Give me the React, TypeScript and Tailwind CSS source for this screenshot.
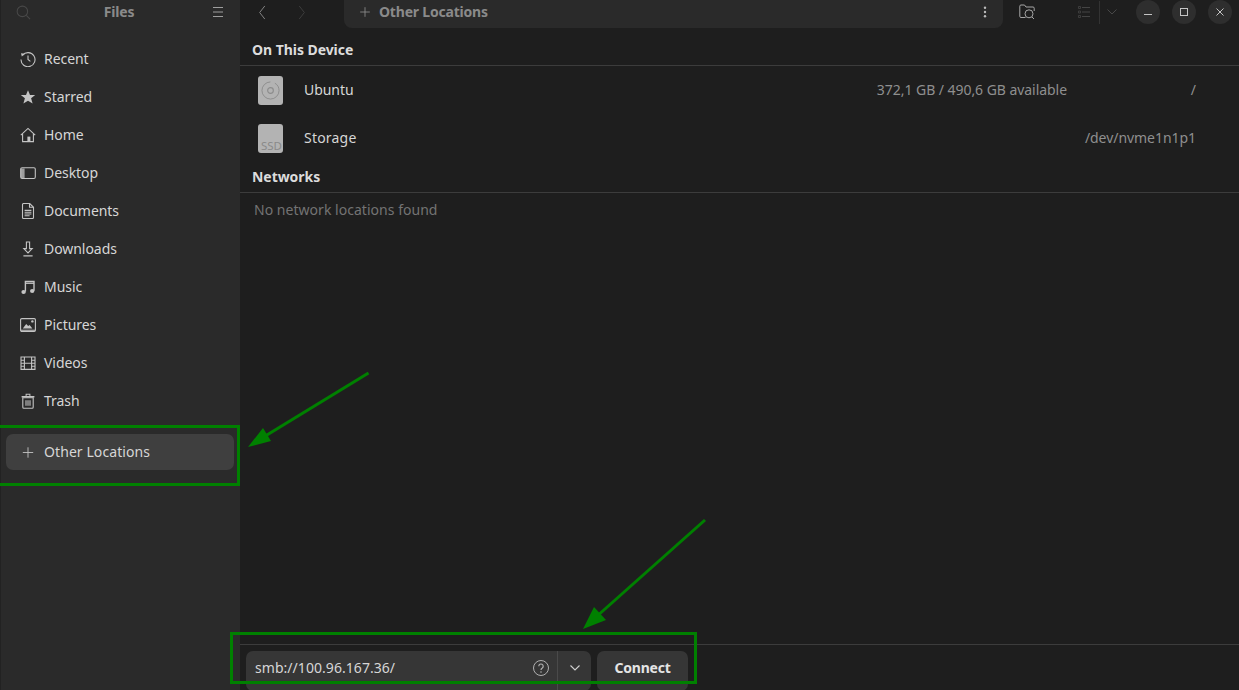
import React from "react";

const stroke = { fill: "none", stroke: "currentColor", strokeWidth: 1.1 } as const;

const icons: Record<string, React.ReactNode> = {
  recent: (
    <>
      <path {...stroke} d="M2.6 4.2A7 7 0 1 1 1 8.5" />
      <path d="M1 2.2 5 2.8 1.8 5.6Z" fill="currentColor" />
      <path {...stroke} d="M8 4.6V8.4L10.4 10.4" />
    </>
  ),
  star: <path fill="currentColor" d="M8 1.2 10 6h5.2l-4.1 3.3 1.5 5.3L8 11.7l-4.6 2.9 1.500-5.300L.8 6H6Z" />,
  home: (
    <>
      <path {...stroke} d="M.8 8.200 8 1.400l7.200 6.800M2.600 7v7.600h10.800V7" />
      <rect x="7.400" y="9.600" width="3" height="5" fill="currentColor" />
    </>
  ),
  desktop: (
    <>
      <rect {...stroke} x=".7" y="2.700" width="14.600" height="10.800" rx="1.400" />
      <path fill="currentColor" opacity=".75" d="M1 3.500h3.600v9.600H1Z" />
    </>
  ),
  documents: (
    <>
      <path {...stroke} d="M2.500 1.500a1 1 0 0 1 1-1h6.200l3.800 3.800v10.200a1 1 0 0 1-1 1h-9a1 1 0 0 1-1-1Z" />
      <path {...stroke} d="M9.500 .7v3.600h3.800M4.600 7.400h6.800M4.600 9.200h6.800M4.600 11h6.800M4.600 12.800h5" />
    </>
  ),
  downloads: <path {...stroke} d="M6.400 1h3.200v6.600h2.600L8 12 3.800 7.600h2.600ZM3.400 14.900h9.200" />,
  music: (
    <>
      <path {...stroke} strokeWidth="1.400" d="M5.400 12.600V2.400H14v9.400" />
      <path {...stroke} strokeWidth="1.400" d="M5.400 4.200H14" />
      <ellipse cx="3.600" cy="13" rx="2.200" ry="1.900" fill="currentColor" />
      <ellipse cx="12.200" cy="12" rx="2.200" ry="1.900" fill="currentColor" />
    </>
  ),
  pictures: (
    <>
      <rect {...stroke} x=".6" y="1.600" width="14.800" height="12.800" rx="1.200" />
      <path fill="currentColor" opacity=".7" d="M1 12.600h14v1.600H1Z" />
      <path fill="currentColor" d="M2.800 11.400 6.200 7l2 2 1.400-1 2.800 3.400Z" />
      <circle cx="12.400" cy="4.400" r="1.200" fill="currentColor" />
    </>
  ),
  videos: <path {...stroke} d="M1 2h14v12.400H1ZM4.400 2v12.400M11.600 2v12.400M1 5.200h3.400M1 8.200h3.400M1 11.200h3.400M11.600 5.200H15M11.600 8.200H15M11.600 11.200H15M4.400 8.200h7.200" />,
  trash: (
    <>
      <path {...stroke} d="M2.800 4.800h10.400v9.400a1 1 0 0 1-1 1H3.800a1 1 0 0 1-1-1ZM6 7.200v5.600M8 7.200v5.600M10 7.200v5.600" />
      <path fill="currentColor" d="M1.600 3h12.800v1.400H1.600ZM5.600 .8h4.800V3H9.400V1.800H6.600V3h-1Z" />
    </>
  ),
  plus: <path {...stroke} d="M8 1.600v12.800M1.600 8h12.800" />,
};

function Icon({ name, className = "" }: { name: string; className?: string }) {
  return (
    <svg viewBox="0 0 16 16" className={`h-4 w-4 shrink-0 ${className}`}>
      {icons[name]}
    </svg>
  );
}

const places = [
  ["recent", "Recent"],
  ["star", "Starred"],
  ["home", "Home"],
  ["desktop", "Desktop"],
  ["documents", "Documents"],
  ["downloads", "Downloads"],
  ["music", "Music"],
  ["pictures", "Pictures"],
  ["videos", "Videos"],
  ["trash", "Trash"],
];

function Disk({ ssd }: { ssd?: boolean }) {
  return (
    <div className="relative flex h-[29px] w-[25px] items-center justify-center overflow-hidden rounded-[3px] bg-[#b3b3b3]">
      {ssd ? (
        <span className="absolute bottom-0 left-[3px] text-[11.5px] leading-[14px] text-[#8a8a8a]">SSD</span>
      ) : (
        <svg viewBox="0 0 20 20" className="h-[19px] w-[19px] text-[#8c8c8c]">
          <circle cx="10" cy="10" r="9" fill="none" stroke="currentColor" strokeWidth="1" strokeDasharray="42 5" />
          <circle cx="10" cy="10" r="3" fill="none" stroke="currentColor" strokeWidth="1.200" />
        </svg>
      )}
    </div>
  );
}

export default function App() {
  return (
    <div className="relative flex h-[690px] w-[1239px] overflow-hidden bg-[#1e1e1e] font-['Noto_Sans',sans-serif] text-[14px] tracking-[-0.05px] text-[#d6d6d6]">
      <aside className="flex h-full w-[240px] shrink-0 flex-col border-l border-[#222] bg-[#2a2a2a]">
        <div className="flex h-[24px] items-center justify-between pl-[15px] pr-[17px]">
          <svg viewBox="0 0 16 16" className="h-[15px] w-[15px] text-[#484848]">
            <circle cx="6.800" cy="6.800" r="5.600" fill="none" stroke="currentColor" strokeWidth="1.100" />
            <path d="m11 11 4 4" stroke="currentColor" strokeWidth="1.100" />
          </svg>
          <span className="mr-[6px] pb-[2px] font-bold tracking-[-0.2px] text-[#8a8a8a]">Files</span>
          <svg viewBox="0 0 12 10" className="h-[10px] w-[10px] text-[#aaa]" preserveAspectRatio="none">
            <path d="M0 .5h12M0 5h12M0 9.500h12" stroke="currentColor" strokeWidth="1" />
          </svg>
        </div>
        <nav className="mt-[16px] flex flex-col">
          {places.map(([icon, label]) => (
            <div key={label} className="flex h-[38px] items-center gap-[8px] pl-[19px]">
              <Icon name={icon} className="text-[#c4c4c4]" />
              <span className="pb-[2px]">{label}</span>
            </div>
          ))}
        </nav>
        <div className="ml-[5px] mr-[6px] mt-[14px] flex h-[36px] items-center gap-[8px] rounded-[7px] bg-[#3f3f3f] pl-[14px]">
          <Icon name="plus" className="h-[13px] w-[16px] text-[#c4c4c4]" />
          <span className="pb-[2px] tracking-[0.08px]">Other Locations</span>
        </div>
      </aside>

      <main className="flex h-full min-w-0 flex-1 flex-col">
        <header className="flex h-[29px] shrink-0 items-start text-[#6a6a6a]">
          <div className="flex h-[24px] w-[104px] items-center gap-[32px] pl-[18px]">
            <svg viewBox="0 0 8 16" className="h-[15px] w-[8px] text-[#8a8a8a]">
              <path d="M7 1 1.500 8 7 15" fill="none" stroke="currentColor" strokeWidth="1" />
            </svg>
            <svg viewBox="0 0 8 16" className="h-[15px] w-[8px] text-[#3f3f3f]">
              <path d="M1 1l5.500 7L1 15" fill="none" stroke="currentColor" strokeWidth="1" />
            </svg>
          </div>
          <div className="flex h-[28px] w-[659px] items-center justify-between rounded-b-[8px] bg-[#2a2a2a] pl-[15px] pr-[16px]">
            <div className="flex items-center gap-[8px] pb-[4px]">
              <Icon name="plus" className="h-[12px] w-[12px] text-[#8f8f8f]" />
              <span className="pb-[2px] font-bold tracking-[-0.2px] text-[#8a8a8a]">Other Locations</span>
            </div>
            <svg viewBox="0 0 4 14" className="mb-[4px] h-[12px] w-[4px] text-[#bbb]">
              <circle cx="2" cy="2" r="1.400" fill="currentColor" />
              <circle cx="2" cy="7" r="1.400" fill="currentColor" />
              <circle cx="2" cy="12" r="1.400" fill="currentColor" />
            </svg>
          </div>
          <div className="flex h-[24px] flex-1 items-center pl-[15px]">
            <svg viewBox="0 0 16 16" className="ml-px h-[16px] w-[16px] text-[#a6a6a6]">
              <path d="M6.500 13.500H2a1.200 1.200 0 0 1-1.200-1.200V2.200A1.200 1.200 0 0 1 2 1h3.500L7 3h7a1.200 1.200 0 0 1 1.200 1.200V7" fill="none" stroke="currentColor" strokeWidth="1" />
              <circle cx="10" cy="9.800" r="4" fill="none" stroke="currentColor" strokeWidth="1" />
              <path d="m13 13 2 2" stroke="currentColor" strokeWidth="1" />
            </svg>
            <svg viewBox="0 0 12 12" className="ml-[43px] h-[12px] w-[12px] text-[#444]">
              <path d="M4 1.500h8M4 6h8M4 10.500h8" stroke="currentColor" strokeWidth="1" />
              <path d="M.5.5h2v2h-2ZM.5 5h2v2h-2ZM.5 9.500h2v2h-2Z" fill="none" stroke="currentColor" strokeWidth=".8" />
            </svg>
            <div className="ml-[9px] h-[23px] w-px bg-[#333]" />
            <svg viewBox="0 0 10 6" className="ml-[7px] h-[6px] w-[10px] text-[#484848]">
              <path d="m.5.5 4.500 4.500L9.500.5" fill="none" stroke="currentColor" strokeWidth="1" />
            </svg>
            <div className="ml-[19px] flex items-center gap-[12px]">
              <div className="flex h-[24px] w-[24px] items-center justify-center rounded-full bg-[#2e2e2e]">
                <div className="mt-[5px] h-px w-[8px] bg-[#c4c4c4]" />
              </div>
              <div className="flex h-[24px] w-[24px] items-center justify-center rounded-full bg-[#2e2e2e]">
                <div className="h-[8px] w-[8px] border border-[#c4c4c4]" />
              </div>
              <div className="flex h-[24px] w-[24px] items-center justify-center rounded-full bg-[#2e2e2e]">
                <svg viewBox="0 0 8 8" className="h-[8px] w-[8px] text-[#c4c4c4]">
                  <path d="m.5.5 7 7M7.500.5l-7 7" stroke="currentColor" strokeWidth="1" />
                </svg>
              </div>
            </div>
          </div>
        </header>

        <div className="flex h-[37px] shrink-0 items-end border-b border-[#3c3c3c] px-[12px] pb-[5px]">
          <span className="font-bold text-[#dcdcdc]">On This Device</span>
        </div>
        <div className="flex h-[48px] shrink-0 items-center pl-[18px] pr-[43px]">
          <Disk />
          <span className="ml-[21px] pb-[2px]">Ubuntu</span>
          <span className="ml-auto pb-[2px] text-[#8f8f8f]">372,1 GB / 490,6 GB available</span>
          <span className="w-[129px] pb-[2px] text-right text-[#8f8f8f]">/</span>
        </div>
        <div className="flex h-[48px] shrink-0 items-center pl-[18px] pr-[43px]">
          <Disk ssd />
          <span className="ml-[21px] pb-[2px] tracking-[0.2px]">Storage</span>
          <span className="ml-auto pb-[2px] text-[#8f8f8f]">/dev/nvme1n1p1</span>
        </div>
        <div className="flex h-[31px] shrink-0 items-end border-b border-[#3c3c3c] px-[12px] pb-[5px]">
          <span className="font-bold text-[#dcdcdc]">Networks</span>
        </div>
        <div className="flex h-[34px] shrink-0 items-center px-[14px] pb-[1px] tracking-[0.03px] text-[#737373]">No network locations found</div>
        <div className="flex-1" />

        <footer className="flex h-[46px] shrink-0 gap-[6px] border-t border-[#3c3c3c] pl-[6px] pt-[6px]">
          <div className="flex h-[40px] w-[345px] rounded-[7px] bg-[#363636] pb-[6px]">
            <div className="flex flex-1 items-center justify-between pl-[9px] pr-[8px]">
              <span className="pb-[2px] tracking-[0.05px]">smb://100.96.167.36/</span>
              <svg viewBox="0 0 16 16" className="h-[16px] w-[16px] text-[#b0b0b0]">
                <circle cx="8" cy="8" r="7.500" fill="none" stroke="currentColor" strokeWidth="1" />
                <path d="M5.800 6.200a2.200 2.200 0 1 1 3.500 1.800c-.8.500-1.300 1-1.300 2" fill="none" stroke="currentColor" strokeWidth="1.200" />
                <circle cx="8" cy="12" r=".8" fill="currentColor" />
              </svg>
            </div>
            <div className="-mb-[6px] flex w-[34px] items-center justify-center border-l border-[#4a4a4a] pb-[6px]">
              <svg viewBox="0 0 10 6" className="h-[6px] w-[10px] text-[#d0d0d0]">
                <path d="m.5.5 4.500 4.500L9.500.5" fill="none" stroke="currentColor" strokeWidth="1.100" />
              </svg>
            </div>
          </div>
          <div className="flex h-[40px] w-[91px] items-center justify-center rounded-[7px] bg-[#363636] pb-[8px] font-bold tracking-[-0.2px] text-[#e4e4e4]">
            Connect
          </div>
        </footer>
      </main>

      <div className="absolute left-[-3px] top-[425px] h-[61px] w-[243px] border-[3px] border-[#008000]" />
      <div className="absolute left-[230px] top-[632px] h-[52px] w-[467px] border-[3px] border-[#008000]" />
      <svg className="pointer-events-none absolute inset-0 h-[690px] w-[1239px]" viewBox="0 0 1239 690">
        <path d="M368.500 373 262 438" stroke="#008000" strokeWidth="3" />
        <path d="M248 447 263 428 271 441Z" fill="#008000" />
        <path d="M705 520 596 617" stroke="#008000" strokeWidth="3" />
        <path d="M583 629 594 607 606 620Z" fill="#008000" />
      </svg>
    </div>
  );
}
